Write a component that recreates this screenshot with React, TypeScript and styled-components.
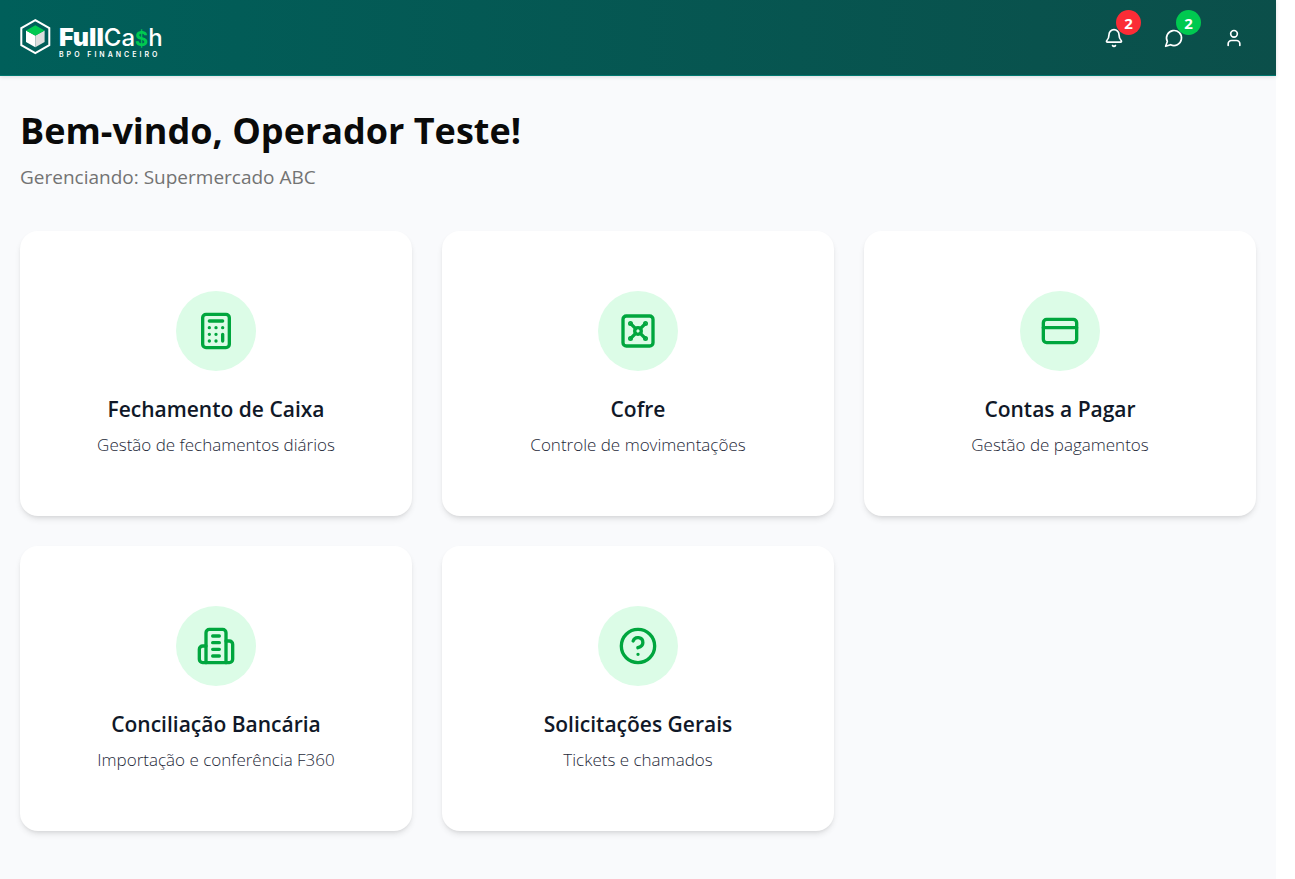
import React from "react";
import styled, { createGlobalStyle } from "styled-components";

const GlobalStyle = createGlobalStyle`
  *, *::before, *::after { box-sizing: border-box; }
  body { margin: 0; background: #ffffff; font-family: "Open Sans", "Noto Sans", sans-serif; }
`;

const Shell = styled.div`
  min-height: 100vh;
  margin-right: 19px;
  background: #f9fafc;
`;

const Header = styled.header`
  display: flex;
  align-items: center;
  justify-content: space-between;
  height: 76px;
  padding: 0 20px;
  background: linear-gradient(to right, #005f5a, #0b4f4a);
  border-bottom: 1px solid #00786f;
  box-shadow: 0 1px 4px rgba(0, 0, 0, 0.12);
`;

const Brand = styled.a`
  display: flex;
  align-items: flex-start;
  gap: 8px;
  padding-top: 2px;
  color: #ffffff;
  text-decoration: none;
`;

const BrandText = styled.span`
  display: flex;
  flex-direction: column;
  padding-top: 6px;
`;

const BrandName = styled.span`
  font-family: "Inter", sans-serif;
  font-size: 24px;
  font-weight: 500;
  line-height: 24px;
  b { font-size: 25px; font-weight: 900; }
  i { font-size: 20px; font-style: normal; font-weight: 700; color: #00c950; }
`;

const BrandTag = styled.span`
  font-family: "Inter", sans-serif;
  font-size: 7px;
  font-weight: 600;
  line-height: 8px;
  letter-spacing: 3px;
`;

const Actions = styled.nav`
  display: flex;
  gap: 16px;
`;

const IconButton = styled.button`
  position: relative;
  display: grid;
  place-items: center;
  width: 44px;
  height: 44px;
  padding: 0;
  border: 0;
  border-radius: 8px;
  background: transparent;
  color: #ffffff;
  cursor: pointer;
`;

const Badge = styled.span<{ $color: string }>`
  position: absolute;
  top: -6px;
  right: -5px;
  width: 25px;
  height: 25px;
  border-radius: 50%;
  background: ${(p) => p.$color};
  font-family: "Open Sans", sans-serif;
  font-size: 15px;
  font-weight: 700;
  line-height: 26px;
  text-align: center;
`;

const Main = styled.main`
  padding: 30px 20px 48px;
`;

const Heading = styled.h1`
  margin: 0;
  font-size: 36px;
  font-weight: 700;
  line-height: 50px;
  color: #0a0a0a;
`;

const Subtitle = styled.p`
  margin: 6px 0 39px;
  font-size: 19px;
  line-height: 30px;
  color: #737373;
`;

const Grid = styled.div`
  display: grid;
  grid-template-columns: repeat(3, minmax(0, 1fr));
  gap: 30px;
`;

const Card = styled.a`
  display: flex;
  flex-direction: column;
  align-items: center;
  padding: 60px 30px 59px;
  border-radius: 18px;
  background: #ffffff;
  box-shadow: 0 4px 6px -1px rgba(0, 0, 0, 0.1), 0 2px 4px -2px rgba(0, 0, 0, 0.1);
  text-align: center;
  text-decoration: none;
`;

const IconCircle = styled.span`
  display: grid;
  place-items: center;
  width: 80px;
  height: 80px;
  margin-bottom: 21px;
  border-radius: 50%;
  background: #dcfce7;
  color: #00a63e;
`;

const CardTitle = styled.h2`
  margin: 0 0 5px;
  font-size: 21px;
  font-weight: 600;
  line-height: 35px;
  color: #101828;
`;

const CardText = styled.p`
  margin: 0;
  font-size: 17px;
  font-weight: 300;
  line-height: 25px;
  color: #1e2939;
`;

const Icon = ({ size, children }: { size: number; children: React.ReactNode }) => (
  <svg
    width={size}
    height={size}
    viewBox="0 0 24 24"
    fill="none"
    stroke="currentColor"
    strokeWidth="2"
    strokeLinecap="round"
    strokeLinejoin="round"
    aria-hidden="true"
  >
    {children}
  </svg>
);

const LogoMark = () => (
  <svg width="31" height="36" viewBox="0 0 31 36" aria-hidden="true">
    <path d="M15.300 1.200 29.300 9.200V26.200L15.300 34.200 1.300 26.200V9.200Z" fill="none" stroke="#ffffff" strokeWidth="2" />
    <path d="M6 11.500v11.500l9.300 5.300V16.500Z" fill="#ffffff" />
    <path d="M24.600 11.500v11.500l-9.300 5.300V16.500Z" fill="#dedede" />
    <path d="M15.300 6.300 24.600 11.500 15.300 16.800 6 11.500Z" fill="#00c950" />
  </svg>
);

const cards = [
  {
    title: "Fechamento de Caixa",
    text: "Gestão de fechamentos diários",
    icon: (
      <>
        <rect width="16" height="20" x="4" y="2" rx="2" />
        <path d="M8 6h8M16 14v4M16 10h.01M12 10h.01M8 10h.01M12 14h.01M8 14h.01M12 18h.01M8 18h.01" />
      </>
    ),
  },
  {
    title: "Cofre",
    text: "Controle de movimentações",
    icon: (
      <>
        <rect width="18" height="18" x="3" y="3" rx="2" />
        <circle cx="7.500" cy="7.500" r=".5" fill="currentColor" />
        <path d="m7.900 7.900 2.700 2.700" />
        <circle cx="16.500" cy="7.500" r=".5" fill="currentColor" />
        <path d="m13.400 10.600 2.700-2.700" />
        <circle cx="7.500" cy="16.500" r=".5" fill="currentColor" />
        <path d="m7.900 16.100 2.700-2.700" />
        <circle cx="16.500" cy="16.500" r=".5" fill="currentColor" />
        <path d="m13.400 13.400 2.700 2.700" />
        <circle cx="12" cy="12" r="2" />
      </>
    ),
  },
  {
    title: "Contas a Pagar",
    text: "Gestão de pagamentos",
    icon: (
      <>
        <rect width="20" height="14" x="2" y="5" rx="2" />
        <path d="M2 10h20" />
      </>
    ),
  },
  {
    title: "Conciliação Bancária",
    text: "Importação e conferência F360",
    icon: (
      <>
        <path d="M6 22V4a2 2 0 0 1 2-2h8a2 2 0 0 1 2 2v18Z" />
        <path d="M6 12H4a2 2 0 0 0-2 2v6a2 2 0 0 0 2 2h2" />
        <path d="M18 9h2a2 2 0 0 1 2 2v9a2 2 0 0 1-2 2h-2" />
        <path d="M10 6h4M10 10h4M10 14h4M10 18h4" />
      </>
    ),
  },
  {
    title: "Solicitações Gerais",
    text: "Tickets e chamados",
    icon: (
      <>
        <circle cx="12" cy="12" r="10" />
        <path d="M9.090 9a3 3 0 0 1 5.830 1c0 2-3 3-3 3M12 17h.01" />
      </>
    ),
  },
];

export default function App() {
  return (
    <>
      <GlobalStyle />
      <Shell>
        <Header>
          <Brand href="#" aria-label="FullCash BPO Financeiro">
            <LogoMark />
            <BrandText>
              <BrandName><b>Full</b>Ca<i>$</i>h</BrandName>
              <BrandTag>BPO FINANCEIRO</BrandTag>
            </BrandText>
          </Brand>
          <Actions>
            <IconButton type="button" aria-label="Notificações">
              <Icon size={20}>
                <path d="M10.268 21a2 2 0 0 0 3.464 0" />
                <path d="M3.262 15.326A1 1 0 0 0 4 17h16a1 1 0 0 0 .74-1.673C19.410 13.956 18 12.499 18 8A6 6 0 0 0 6 8c0 4.499-1.411 5.956-2.738 7.326" />
              </Icon>
              <Badge $color="#fb2c36">2</Badge>
            </IconButton>
            <IconButton type="button" aria-label="Mensagens">
              <Icon size={20}>
                <path d="M7.900 20A9 9 0 1 0 4 16.100L2 22Z" />
              </Icon>
              <Badge $color="#00c950">2</Badge>
            </IconButton>
            <IconButton type="button" aria-label="Perfil">
              <Icon size={20}>
                <path d="M19 21v-2a4 4 0 0 0-4-4H9a4 4 0 0 0-4 4v2" />
                <circle cx="12" cy="7" r="4" />
              </Icon>
            </IconButton>
          </Actions>
        </Header>
        <Main>
          <Heading>Bem-vindo, Operador Teste!</Heading>
          <Subtitle>Gerenciando: Supermercado ABC</Subtitle>
          <Grid>
            {cards.map((card) => (
              <Card href="#" key={card.title}>
                <IconCircle><Icon size={40}>{card.icon}</Icon></IconCircle>
                <CardTitle>{card.title}</CardTitle>
                <CardText>{card.text}</CardText>
              </Card>
            ))}
          </Grid>
        </Main>
      </Shell>
    </>
  );
}
